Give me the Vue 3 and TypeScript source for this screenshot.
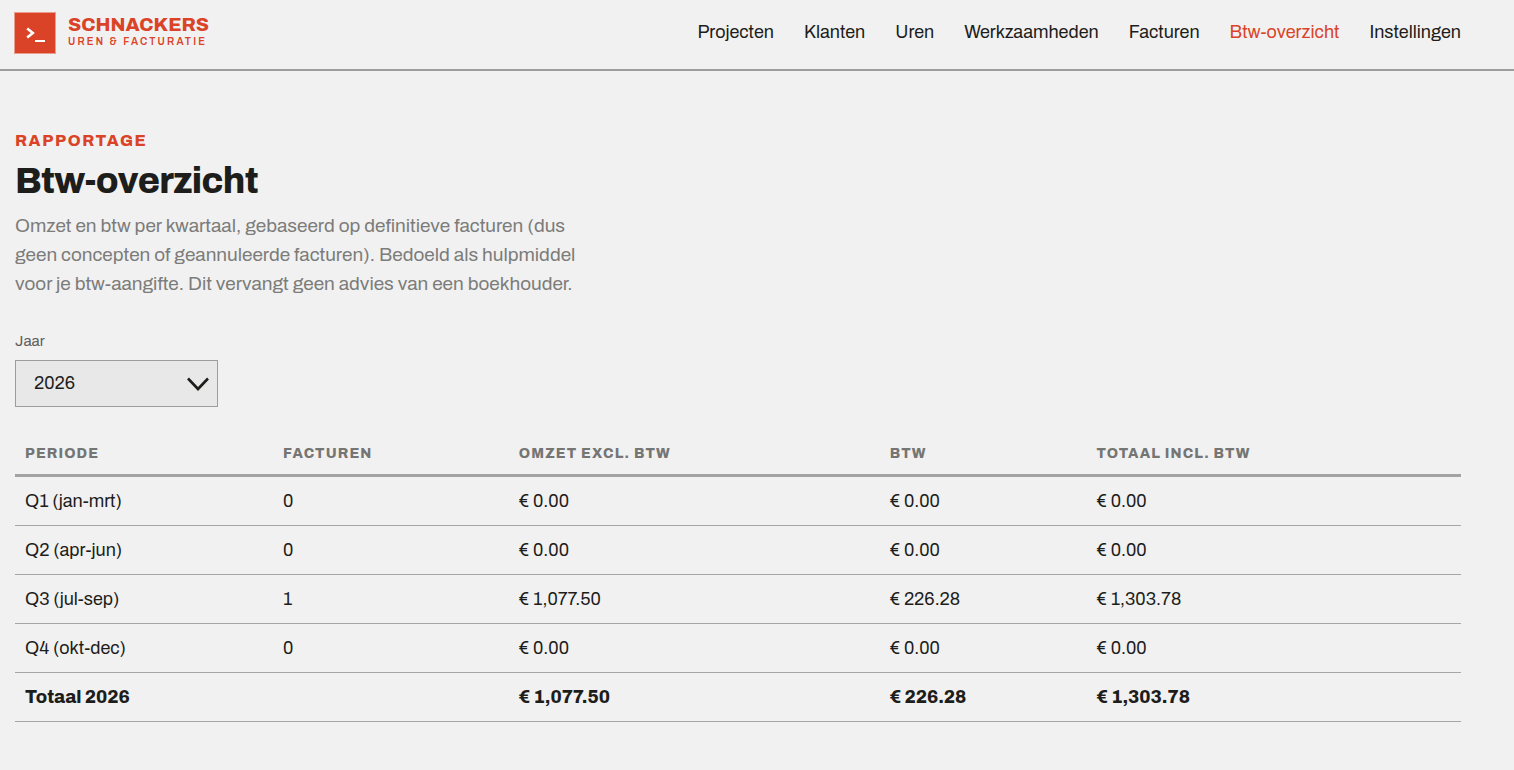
<script setup lang="ts">
import { computed, ref } from 'vue'

interface Quarter {
  label: string
  invoices: number
  revenue: number
  vat: number
}

const navItems = ['Projecten', 'Klanten', 'Uren', 'Werkzaamheden', 'Facturen', 'Btw-overzicht', 'Instellingen']
const activeItem = 'Btw-overzicht'

const year = ref('2026')

const quarters: Quarter[] = [
  { label: 'Q1 (jan-mrt)', invoices: 0, revenue: 0, vat: 0 },
  { label: 'Q2 (apr-jun)', invoices: 0, revenue: 0, vat: 0 },
  { label: 'Q3 (jul-sep)', invoices: 1, revenue: 1077.5, vat: 226.28 },
  { label: 'Q4 (okt-dec)', invoices: 0, revenue: 0, vat: 0 },
]

const totals = computed(() => ({
  revenue: quarters.reduce((sum, q) => sum + q.revenue, 0),
  vat: quarters.reduce((sum, q) => sum + q.vat, 0),
}))

function euro(amount: number): string {
  return '€ ' + amount.toLocaleString('en-US', { minimumFractionDigits: 2, maximumFractionDigits: 2 })
}
</script>

<template>
  <div class="app">
    <header class="site-header">
      <a class="brand" href="#">
        <svg class="brand-mark" viewBox="0 0 42 42" aria-hidden="true">
          <rect width="42" height="42" fill="#e99d8c" />
          <rect x="1" y="1" width="40" height="40" fill="#da4327" />
          <path d="M13.2 16.5 L18.8 21 L13.2 25.5" fill="none" stroke="#fff" stroke-width="2.6" />
          <rect x="21" y="28" width="10" height="2" fill="#fff" />
        </svg>
        <span class="brand-text">
          <span class="brand-name">SCHNACKERS</span>
          <span class="brand-tagline">UREN &amp; FACTURATIE</span>
        </span>
      </a>
      <nav class="nav" aria-label="Hoofdmenu">
        <a
          v-for="item in navItems"
          :key="item"
          href="#"
          :class="{ active: item === activeItem }"
          :aria-current="item === activeItem ? 'page' : undefined"
        >{{ item }}</a>
      </nav>
    </header>

    <main class="content">
      <p class="eyebrow">RAPPORTAGE</p>
      <h1>Btw-overzicht</h1>
      <p class="intro">
        Omzet en btw per kwartaal, gebaseerd op definitieve facturen (dus geen concepten of
        geannuleerde facturen). Bedoeld als hulpmiddel voor je btw-aangifte. Dit vervangt geen
        advies van een boekhouder.
      </p>

      <div class="field">
        <label for="year">Jaar</label>
        <div class="select-wrap">
          <select id="year" v-model="year">
            <option value="2026">2026</option>
          </select>
          <svg class="chevron" viewBox="0 0 24 16" aria-hidden="true">
            <path d="M2 2.5 L12 13 L22 2.5" fill="none" stroke="#1d1d1b" stroke-width="2.6" />
          </svg>
        </div>
      </div>

      <table>
        <colgroup>
          <col class="col-period" />
          <col class="col-invoices" />
          <col class="col-revenue" />
          <col class="col-vat" />
          <col />
        </colgroup>
        <thead>
          <tr>
            <th scope="col">PERIODE</th>
            <th scope="col">FACTUREN</th>
            <th scope="col">OMZET EXCL. BTW</th>
            <th scope="col">BTW</th>
            <th scope="col">TOTAAL INCL. BTW</th>
          </tr>
        </thead>
        <tbody>
          <tr v-for="q in quarters" :key="q.label">
            <td>{{ q.label }}</td>
            <td>{{ q.invoices }}</td>
            <td>{{ euro(q.revenue) }}</td>
            <td>{{ euro(q.vat) }}</td>
            <td>{{ euro(q.revenue + q.vat) }}</td>
          </tr>
        </tbody>
        <tfoot>
          <tr>
            <td>Totaal {{ year }}</td>
            <td></td>
            <td>{{ euro(totals.revenue) }}</td>
            <td>{{ euro(totals.vat) }}</td>
            <td>{{ euro(totals.revenue + totals.vat) }}</td>
          </tr>
        </tfoot>
      </table>
    </main>
  </div>
</template>

<style>
body {
  margin: 0;
  background: #f1f1f1;
}
</style>

<style scoped>
.app {
  color: #1d1d1b;
  font-family: Archivo, 'Liberation Sans', Arial, sans-serif;
  font-size: 18px;
  line-height: 28px;
}

.site-header {
  display: flex;
  justify-content: space-between;
  align-items: flex-start;
  padding: 12px 53px 15px 14px;
  border-bottom: 2px solid #9d9d9d;
}

.brand {
  display: flex;
  gap: 12px;
  color: #da4327;
  text-decoration: none;
}

.brand-mark {
  width: 42px;
  height: 42px;
}

.brand-text {
  display: flex;
  flex-direction: column;
  padding-top: 3px;
}

.brand-name {
  font-size: 19px;
  line-height: 20px;
  font-weight: 800;
}

.brand-tagline {
  font-size: 10px;
  line-height: 14px;
  font-weight: 600;
  letter-spacing: 0.22em;
}

.nav {
  display: flex;
  gap: 30px;
  padding-top: 6px;
}

.nav a {
  color: inherit;
  text-decoration: none;
}

.nav a.active {
  color: #da4327;
}

.content {
  padding: 56px 53px 48px 15px;
}

.eyebrow {
  margin: 0;
  color: #da4327;
  font-size: 16px;
  font-weight: 800;
  letter-spacing: 0.1em;
}

h1 {
  margin: 4px 0 8px;
  font-size: 36px;
  line-height: 44px;
  font-weight: 800;
  letter-spacing: -0.02em;
}

.intro {
  max-width: 576px;
  margin: 0;
  color: #7c7c7a;
  font-size: 19px;
  line-height: 29px;
}

.field {
  display: flex;
  flex-direction: column;
  align-items: flex-start;
  gap: 7px;
  margin-top: 31px;
}

.field label {
  color: #5c5c5a;
  font-size: 15px;
  line-height: 24px;
}

.select-wrap {
  position: relative;
  width: 203px;
}

select {
  appearance: none;
  box-sizing: border-box;
  width: 100%;
  height: 47px;
  padding: 0 40px 2px 18px;
  border: 1px solid #9d9d9d;
  border-radius: 0;
  background: #e8e8e8;
  color: inherit;
  font: inherit;
}

.chevron {
  position: absolute;
  top: 16px;
  right: 8px;
  width: 24px;
  height: 16px;
  pointer-events: none;
}

table {
  width: 100%;
  margin-top: 25px;
  border-collapse: collapse;
  table-layout: fixed;
}

.col-period {
  width: 17.85%;
}

.col-invoices {
  width: 16.3%;
}

.col-revenue {
  width: 25.65%;
}

.col-vat {
  width: 14.3%;
}

th,
td {
  padding: 10px;
  text-align: left;
  border-bottom: 1px solid #a6a6a6;
}

th {
  padding: 8px 10px 6px;
  color: #757573;
  font-size: 14px;
  font-weight: 800;
  letter-spacing: 0.08em;
  border-bottom: 3px solid #a3a3a3;
}

tfoot td {
  font-weight: 800;
}
</style>
